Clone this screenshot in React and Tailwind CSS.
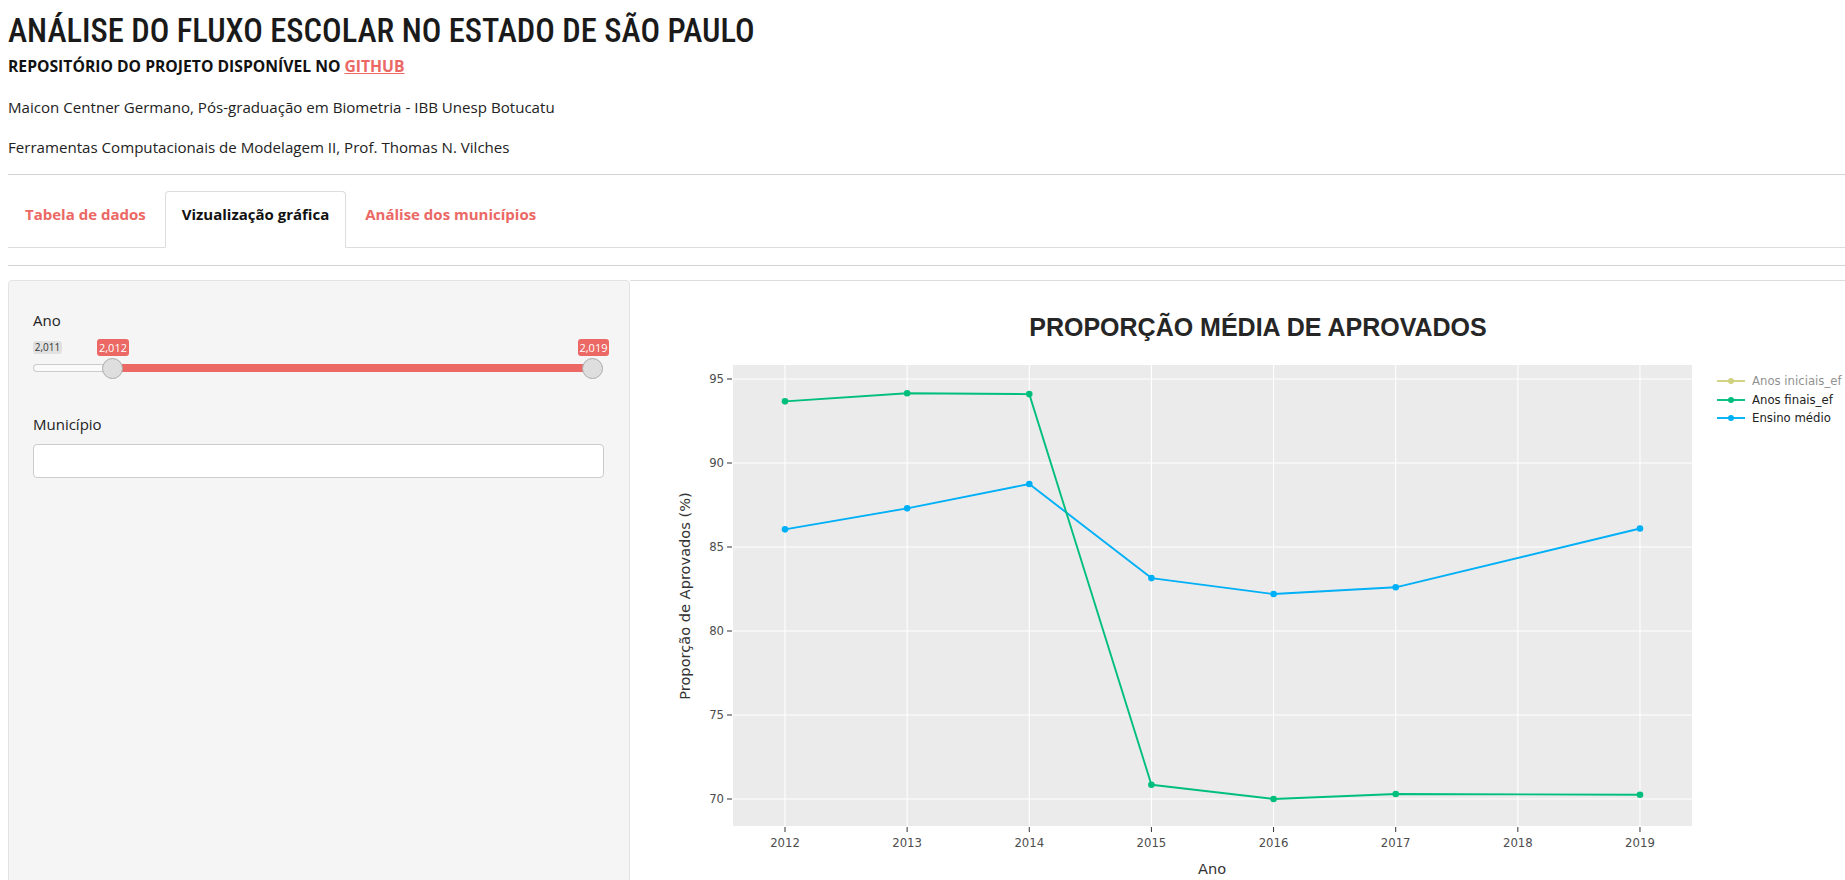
import React from 'react';

const BODY = { fontFamily: '"Open Sans", "Noto Sans", sans-serif' };
const PLOT_FONT = '"DejaVu Sans", Verdana, sans-serif';

const finais = [[2012, 93.67], [2013, 94.15], [2014, 94.1], [2015, 70.85], [2016, 70.0], [2017, 70.3], [2019, 70.25]];
const medio = [[2012, 86.05], [2013, 87.3], [2014, 88.75], [2015, 83.15], [2016, 82.2], [2017, 82.6], [2019, 86.1]];

const xs = (yr) => 155 + (yr - 2012) * 122.14;
const ys = (v) => 98 + (95 - v) * 16.8;

function Series({ data, color }) {
  const pts = data.map(([x, y]) => `${xs(x)},${ys(y)}`).join(' ');
  return (
    <g>
      <polyline points={pts} fill="none" stroke={color} strokeWidth={1.9} strokeLinejoin="round" />
      {data.map(([x, y]) => (
        <circle key={x} cx={xs(x)} cy={ys(y)} r={3.3} fill={color} />
      ))}
    </g>
  );
}

function Chart() {
  const years = [2012, 2013, 2014, 2015, 2016, 2017, 2018, 2019];
  const vals = [95, 90, 85, 80, 75, 70];
  const legend = [
    { label: 'Anos iniciais_ef', color: '#A3A500', y: 100, faded: true },
    { label: 'Anos finais_ef', color: '#00BF7D', y: 119 },
    { label: 'Ensino médio', color: '#00B0F6', y: 137 },
  ];
  return (
    <svg width="1215" height="600" className="block">
      <text x="628" y="55" textAnchor="middle" fontFamily='"Liberation Sans", Arial, sans-serif' fontWeight="700" fontSize="25" fill="#262626">
        PROPORÇÃO MÉDIA DE APROVADOS
      </text>
      <rect x="103" y="84" width="959" height="461" fill="#ebebeb" />
      {years.map((yr) => (
        <line key={yr} x1={xs(yr)} x2={xs(yr)} y1="84" y2="545" stroke="#fff" strokeWidth="1.1" />
      ))}
      {vals.map((v) => (
        <line key={v} x1="103" x2="1062" y1={ys(v)} y2={ys(v)} stroke="#fff" strokeWidth="1.1" />
      ))}
      <Series data={medio} color="#00B0F6" />
      <Series data={finais} color="#00BF7D" />
      {vals.map((v) => (
        <g key={v}>
          <line x1="97" x2="102" y1={ys(v)} y2={ys(v)} stroke="#333" strokeWidth="1" />
          <text x="94" y={ys(v) + 4.3} textAnchor="end" fontFamily={PLOT_FONT} fontSize="11.7" fill="#4d4d4d">{v}</text>
        </g>
      ))}
      {years.map((yr) => (
        <g key={yr}>
          <line x1={xs(yr)} x2={xs(yr)} y1="546" y2="551" stroke="#333" strokeWidth="1" />
          <text x={xs(yr)} y="565.5" textAnchor="middle" fontFamily={PLOT_FONT} fontSize="11.7" fill="#4d4d4d">{yr}</text>
        </g>
      ))}
      <text transform="translate(55,315) rotate(-90)" y="5" textAnchor="middle" fontFamily={PLOT_FONT} fontSize="14.6" fill="#333">
        Proporção de Aprovados (%)
      </text>
      <text x="582" y="593" textAnchor="middle" fontFamily={PLOT_FONT} fontSize="14.6" fill="#333">Ano</text>
      {legend.map((l) => (
        <g key={l.label} opacity={l.faded ? 0.5 : 1}>
          <line x1="1087" x2="1115" y1={l.y} y2={l.y} stroke={l.color} strokeWidth="1.9" />
          <circle cx="1101" cy={l.y} r="3" fill={l.color} />
          <text x="1122" y={l.y + 4.3} fontFamily={PLOT_FONT} fontSize="11.7" fill="#222">{l.label}</text>
        </g>
      ))}
    </svg>
  );
}

// ion.rangeSlider look: value tags on top, track with two handles below
function RangeSlider() {
  const handle = 'relative z-10 h-[21px] w-[21px] shrink-0 rounded-full border border-[#aaa] bg-[#dedede]';
  return (
    <div className="mt-[5px] w-[570px]">
      <div className="flex h-[22px] items-start pt-[4px] text-center">
        <span className="mt-[2px] h-[13px] w-[29px] rounded-[3px] bg-[#e1e1e1] text-[10px] leading-[13px] text-[#333]">2,011</span>
        <span className="ml-[35px] h-[17px] w-[32px] rounded-[3px] bg-[#eb6864] text-[11px] leading-[17px] text-white">2,012</span>
        <span className="ml-auto -mr-[6px] h-[17px] w-[31px] rounded-[3px] bg-[#eb6864] text-[11px] leading-[17px] text-white">2,019</span>
      </div>
      <div className="flex h-[22px] items-center">
        <div className="h-[8px] w-[72px] shrink-0 rounded-l-full border border-r-0 border-[#ccc] bg-[#fafafa]" />
        <div className={`${handle} -ml-[3px]`} />
        <div className="-mx-[10px] h-[8px] flex-1 bg-[#eb6864]" />
        <div className={handle} />
      </div>
    </div>
  );
}

export default function App() {
  const tabs = ['Tabela de dados', 'Vizualização gráfica', 'Análise dos municípios'];
  return (
    <div className="h-[880px] overflow-hidden bg-white text-[#222] pl-2" style={BODY}>
      <h1 className="pt-2 h-[54px] leading-[46px] text-[32.5px] font-medium text-[#1a1a1a] whitespace-nowrap" style={{ fontFamily: '"Liberation Sans Narrow", "Arial Narrow", "Roboto Condensed", sans-serif' }}>
        ANÁLISE DO FLUXO ESCOLAR NO ESTADO DE SÃO PAULO
      </h1>
      <h5 className="h-[24px] leading-[24px] text-[15.7px] font-bold text-[#111]">
        REPOSITÓRIO DO PROJETO DISPONÍVEL NO <a className="text-[#eb6864] underline">GITHUB</a>
      </h5>
      <p className="mt-[17px] h-[24px] leading-[24px] text-[15.1px]">
        Maicon Centner Germano, Pós-graduação em Biometria - IBB Unesp Botucatu
      </p>
      <p className="mt-[16px] h-[24px] leading-[24px] text-[15.1px]">
        Ferramentas Computacionais de Modelagem II, Prof. Thomas N. Vilches
      </p>
      <hr className="mt-[15px] border-t border-[#d4d4d4]" />
      <ul className="mt-4 flex gap-[2px] border-b border-[#ddd]">
        {tabs.map((t, i) => (
          <li key={t}>
            <a
              className={
                i === 1
                  ? 'block h-[57px] -mb-px px-4 pt-[11px] text-[15px] font-bold text-[#111] bg-white border border-[#ddd] border-b-white rounded-t-[4px]'
                  : 'block h-[57px] -mb-px px-4 pt-[11px] text-[15px] font-bold text-[#eb6864] border border-transparent'
              }
            >
              {t}
            </a>
          </li>
        ))}
      </ul>
      <hr className="mt-[17px] border-t border-[#d4d4d4]" />
      <div className="mt-[14px] flex">
        <div className="w-[622px] h-[620px] shrink-0 rounded-[4px] border border-[#e3e3e3] bg-[#f5f5f5] px-6 pt-[29px]">
          <label className="block h-[20px] leading-[20px] text-[15px]">Ano</label>
          <RangeSlider />
          <label className="mt-[35px] block h-[20px] leading-[20px] text-[15px]">Município</label>
          <input className="mt-[10px] block h-[34px] w-[571px] rounded-[4px] border border-[#ccc] bg-white" />
        </div>
        <div className="flex-1 border-t border-[#ddd]">
          <Chart />
        </div>
      </div>
    </div>
  );
}
